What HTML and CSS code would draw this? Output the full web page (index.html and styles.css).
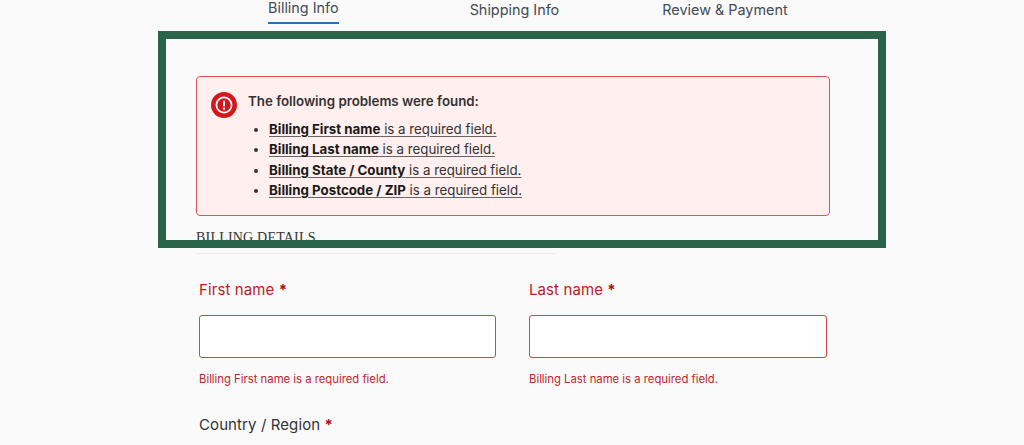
FILE: index.html
```html
<!DOCTYPE html>
<html lang="en">
<head>
  <meta charset="UTF-8">
  <meta name="viewport" content="width=device-width, initial-scale=1.0">
  <title>Checkout - Billing Info</title>
  <link rel="stylesheet" href="styles.css">
</head>
<body>
  <nav class="steps">
    <a href="#" class="step step-active">Billing Info</a>
    <a href="#" class="step step-shipping">Shipping Info</a>
    <a href="#" class="step step-review">Review &amp; Payment</a>
  </nav>

  <main class="checkout">
    <div class="notices">
      <div class="error-box">
        <svg class="error-icon" viewBox="0 0 26 26" aria-hidden="true">
          <circle cx="13" cy="13" r="13" fill="#d3181d"/>
          <circle cx="13" cy="13" r="7.6" fill="none" stroke="#fff" stroke-width="1.7"/>
          <rect x="12" y="8.6" width="2" height="5.8" rx="1" fill="#fff"/>
          <circle cx="13" cy="16.7" r="1.15" fill="#fff"/>
        </svg>
        <div class="error-body">
          <p class="error-title">The following problems were found:</p>
          <ul class="error-list">
            <li><a href="#"><strong>Billing First name</strong> is a required field.</a></li>
            <li><a href="#"><strong>Billing Last name</strong> is a required field.</a></li>
            <li><a href="#"><strong>Billing State / County</strong> is a required field.</a></li>
            <li><a href="#"><strong>Billing Postcode / ZIP</strong> is a required field.</a></li>
          </ul>
        </div>
      </div>
    </div>

    <h2 class="section-title">Billing Details</h2>

    <div class="form-row">
      <div class="field field-error">
        <label for="first-name">First name <span class="req">*</span></label>
        <input type="text" id="first-name">
        <p class="field-msg">Billing First name is a required field.</p>
      </div>
      <div class="field field-error">
        <label for="last-name">Last name <span class="req">*</span></label>
        <input type="text" id="last-name">
        <p class="field-msg">Billing Last name is a required field.</p>
      </div>
    </div>

    <div class="field">
      <label for="country">Country / Region <span class="req">*</span></label>
    </div>
  </main>
</body>
</html>
```

FILE: styles.css
```css
html, body {
  height: 445px;
  overflow: hidden;
}
body {
  font-family: Inter, "Liberation Sans", sans-serif;
  margin: 0;
  background-color: #fafafa;
  color: #333;
}
.steps {
  display: flex;
  align-items: flex-start;
  height: 31px;
  padding-left: 268px;
}
.step {
  color: #424b57;
  font-size: 14.4px;
  line-height: 20px;
  text-decoration: none;
}
.step-active {
  padding-bottom: 4px;
  margin-top: -2px;
  border-bottom: 2px solid #2f6db5;
}
.step-shipping {
  margin-left: 131px;
}
.step-review {
  margin-left: 103px;
}
.checkout {
  margin-left: 158px;
  width: 728px;
}
.notices {
  box-sizing: border-box;
  height: 201px;
  margin: 8px 8px 0;
  padding: 37px 30px 0;
  outline: 8px solid #2a6549;
}
.error-box {
  display: flex;
  box-sizing: border-box;
  width: 634px;
  height: 140px;
  padding: 15px 14px;
  background: #ffefee;
  border: 1px solid #e2545a;
  border-radius: 4px;
}
.error-icon {
  flex: none;
  width: 26px;
  height: 26px;
  margin-right: 11px;
}
.error-title {
  margin: -1px 0 8px;
  font-size: 13.3px;
  line-height: 20px;
  font-weight: 600;
}
.error-list {
  margin: 0;
  padding-left: 21px;
  font-size: 13.3px;
  line-height: 20.4px;
}
.error-list a {
  color: #333;
  text-decoration: underline;
  text-decoration-color: #666;
  text-underline-offset: 2px;
}
.error-list strong {
  color: #1a1a1a;
  font-weight: 700;
}
.section-title {
  position: relative;
  z-index: -1;
  width: 361px;
  margin: -11px 0 0 38px;
  padding-bottom: 6px;
  border-bottom: 1px solid #ececec;
  font-family: "Liberation Serif", serif;
  font-size: 14px;
  line-height: 18px;
  font-weight: 400;
  letter-spacing: 0.2px;
  text-transform: uppercase;
  color: #333;
}
.form-row {
  display: flex;
  gap: 33px;
  margin: 26px 0 0 41px;
}
.form-row .field {
  width: 297px;
}
.form-row .field + .field {
  width: 298px;
}
.field label {
  display: block;
  font-size: 15px;
  line-height: 20px;
  letter-spacing: 0.1px;
}
.field-error label {
  color: #bd1a22;
}
.req {
  color: #b30b12;
  font-weight: 700;
}
.field input {
  display: block;
  box-sizing: border-box;
  width: 100%;
  height: 43px;
  margin-top: 15px;
  background: #fff;
  border: 1px solid #c9474d;
  border-radius: 3px;
}
.field-msg {
  margin: 13px 0 0;
  font-size: 11.3px;
  line-height: 16px;
  color: #c2242c;
}
.checkout > .field {
  margin: 28px 0 0 41px;
}
```
